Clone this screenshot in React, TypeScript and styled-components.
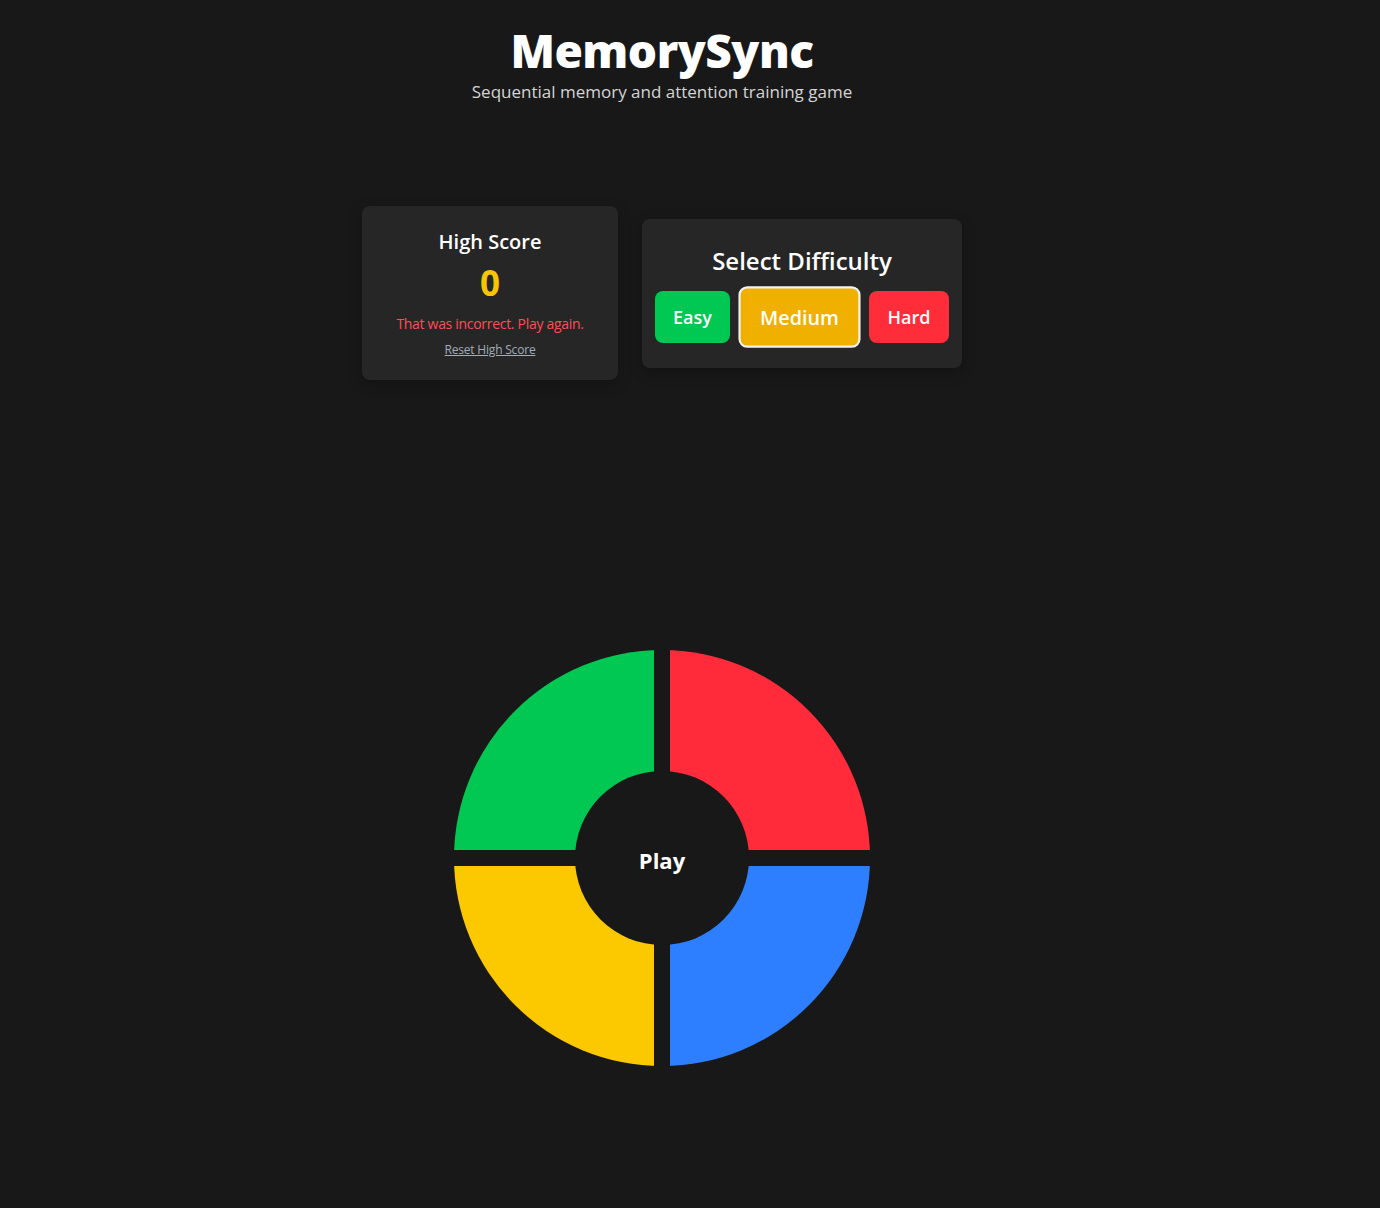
import React from "react";
import styled, { createGlobalStyle } from "styled-components";

const Global = createGlobalStyle`
  html, body { margin: 0; padding: 0; background: #181818; }
  body { font-family: "Open Sans", "Noto Sans", sans-serif; color: #fff; }
  * { box-sizing: border-box; }
`;

const Page = styled.div`
  width: 1324px;
  min-height: 1208px;
  display: flex;
  flex-direction: column;
  align-items: center;
  padding-top: 22px;
`;

const Header = styled.header`
  display: flex;
  flex-direction: column;
  align-items: center;
`;

const Title = styled.h1`
  margin: 0;
  font-size: 46px;
  line-height: 56px;
  font-weight: 800;
  letter-spacing: -0.5px;
  color: #fff;
`;

const Subtitle = styled.p`
  margin: 2px 0 0;
  font-size: 17px;
  line-height: 24px;
  color: #d4d4d4;
`;

const Panels = styled.section`
  margin-top: 102px;
  display: flex;
  align-items: center;
  gap: 24px;
`;

const Card = styled.div<{ $w: number }>`
  width: ${(p) => p.$w}px;
  background: #262626;
  border-radius: 8px;
  display: flex;
  flex-direction: column;
  align-items: center;
  box-shadow: 0 4px 14px rgba(0, 0, 0, 0.25);
`;

const ScoreCard = styled(Card)`
  padding: 22px 16px 22px;
`;

const ScoreLabel = styled.h2`
  margin: 0;
  font-size: 20px;
  line-height: 28px;
  font-weight: 600;
`;

const ScoreValue = styled.div`
  margin-top: 4px;
  font-size: 35px;
  line-height: 46px;
  font-weight: 700;
  color: #f7c600;
`;

const ErrorText = styled.p`
  margin: 8px 0 0;
  font-size: 14px;
  line-height: 20px;
  letter-spacing: -0.3px;
  color: #ff4d55;
`;

const ResetLink = styled.button`
  margin-top: 8px;
  background: none;
  border: none;
  padding: 0;
  font-family: inherit;
  font-size: 12px;
  line-height: 16px;
  letter-spacing: -0.2px;
  color: #a3acb9;
  text-decoration: underline;
  cursor: pointer;
`;

const DiffCard = styled(Card)`
  padding: 26px 12px 23px;
`;

const DiffTitle = styled.h2`
  margin: 0 0 12px;
  font-size: 24px;
  line-height: 32px;
  font-weight: 600;
`;

const ButtonRow = styled.div`
  display: flex;
  align-items: center;
  justify-content: center;
  gap: 14px;
`;

const DiffButton = styled.button<{ $bg: string; $active?: boolean; $w: number }>`
  width: ${(p) => p.$w}px;
  height: ${(p) => (p.$active ? 56 : 52)}px;
  background: ${(p) => p.$bg};
  border: ${(p) => (p.$active ? "2px solid #f2f2f2" : "none")};
  border-radius: 8px;
  color: #fff;
  font-family: inherit;
  font-size: 18px;
  font-weight: 600;
  cursor: pointer;
  transform: ${(p) => (p.$active ? "scale(1.1)" : "none")};
`;

const Board = styled.div`
  margin-top: 270px;
  position: relative;
  width: 416px;
  height: 416px;
`;

const Ring = styled.div`
  width: 416px;
  height: 416px;
  border-radius: 50%;
  overflow: hidden;
  display: grid;
  grid-template-columns: 200px 200px;
  grid-template-rows: 200px 200px;
  gap: 16px;
`;

const Pad = styled.button<{ $color: string }>`
  border: none;
  padding: 0;
  background: ${(p) => p.$color};
  cursor: pointer;
`;

const Center = styled.button`
  position: absolute;
  left: 50%;
  top: 50%;
  width: 174px;
  height: 174px;
  margin: -87px 0 0 -87px;
  border-radius: 50%;
  border: none;
  background: #181818;
  color: #fff;
  font-family: inherit;
  font-size: 22px;
  font-weight: 700;
  padding-top: 4px;
  cursor: pointer;
`;

export default function App() {
  return (
    <>
      <Global />
      <Page>
        <Header>
          <Title>MemorySync</Title>
          <Subtitle>Sequential memory and attention training game</Subtitle>
        </Header>
        <Panels>
          <ScoreCard $w={256}>
            <ScoreLabel>High Score</ScoreLabel>
            <ScoreValue>0</ScoreValue>
            <ErrorText>That was incorrect. Play again.</ErrorText>
            <ResetLink>Reset High Score</ResetLink>
          </ScoreCard>
          <DiffCard $w={320}>
            <DiffTitle>Select Difficulty</DiffTitle>
            <ButtonRow>
              <DiffButton $bg="#00c853" $w={75}>Easy</DiffButton>
              <DiffButton $bg="#f0b000" $w={111} $active>Medium</DiffButton>
              <DiffButton $bg="#ff2d3a" $w={80}>Hard</DiffButton>
            </ButtonRow>
          </DiffCard>
        </Panels>
        <Board>
          <Ring>
            <Pad $color="#00c853" />
            <Pad $color="#ff2b3a" />
            <Pad $color="#fcc800" />
            <Pad $color="#2d7fff" />
          </Ring>
          <Center>Play</Center>
        </Board>
      </Page>
    </>
  );
}
